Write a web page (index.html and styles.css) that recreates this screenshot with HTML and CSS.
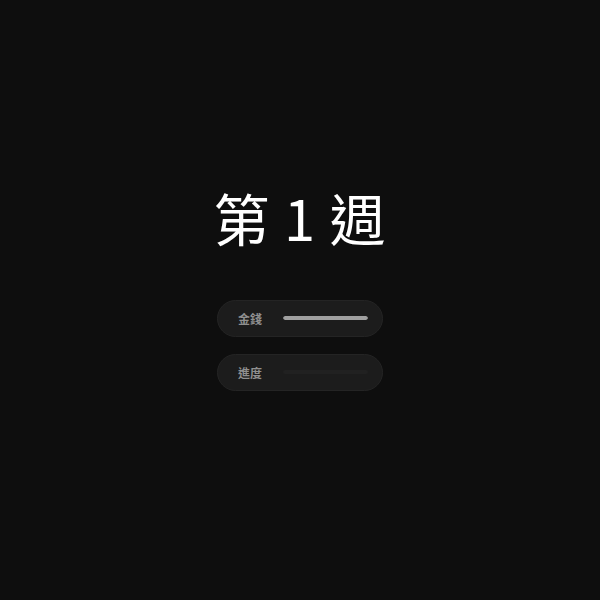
FILE: index.html
```html
<!DOCTYPE html>
<html lang="zh-Hant">
  <head>
    <meta charset="UTF-8" />
    <meta name="viewport" content="width=device-width, initial-scale=1.0" />
    <title>第 1 週</title>
    <link rel="stylesheet" href="styles.css">
  </head>
  <body>
    <div class="container">
      <h1 class="week">第 1 週</h1>
      <div class="stats">
        <div class="stat">
          <span class="stat-label">金錢</span>
          <div class="bar"><div class="bar-fill" style="width: 100%"></div></div>
        </div>
        <div class="stat">
          <span class="stat-label">進度</span>
          <div class="bar"><div class="bar-fill" style="width: 0%"></div></div>
        </div>
      </div>
    </div>
  </body>
</html>
```

FILE: styles.css
```css
html,
body {
  margin: 0;
  height: 100%;
}
body {
  font-family: "Noto Sans CJK TC", "Noto Sans", sans-serif;
  background-color: #0e0e0e;
  color: #ffffff;
}
.container {
  height: 100%;
  display: flex;
  flex-direction: column;
  align-items: center;
  justify-content: center;
  padding-bottom: 21px;
  box-sizing: border-box;
}
.week {
  margin: 0 0 55px;
  font-size: 56px;
  font-weight: 400;
  line-height: 1;
  letter-spacing: 1px;
}
.stats {
  display: flex;
  flex-direction: column;
  gap: 17px;
}
.stat {
  width: 166px;
  height: 37px;
  box-sizing: border-box;
  display: flex;
  align-items: center;
  padding: 0 14px 0 20px;
  background: #1c1c1c;
  border: 1px solid #242424;
  border-radius: 19px;
}
.stat-label {
  font-size: 12px;
  font-weight: 700;
  color: #8f8f8f;
  margin-right: 21px;
}
.bar {
  flex: 1;
  height: 4px;
  background: #212121;
  border-radius: 2px;
  overflow: hidden;
}
.bar-fill {
  height: 100%;
  background: #a0a0a0;
  border-radius: 2px;
}
```
